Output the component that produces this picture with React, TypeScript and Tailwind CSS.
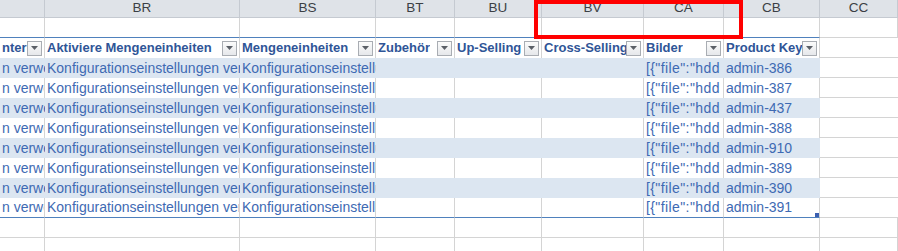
import React from "react";

const cols = ["", "BR", "BS", "BT", "BU", "BV", "CA", "CB", "CC"];

const headers = [
  "nter",
  "Aktiviere Mengeneinheiten",
  "Mengeneinheiten",
  "Zubehör",
  "Up-Selling",
  "Cross-Selling",
  "Bilder",
  "Product Key",
];

const keys = ["386", "387", "437", "388", "910", "389", "390", "391"];

const rowCells = (key: string) => [
  "n verwenden",
  "Konfigurationseinstellungen verwenden",
  "Konfigurationseinstellungen verwenden",
  "",
  "",
  "",
  '[{"file":"hdd',
  `admin-${key}`,
];

function FilterButton() {
  return (
    <span className="ml-auto mr-[2px] flex h-[15px] w-[15px] shrink-0 items-center justify-center border border-[#a9adb3] bg-gradient-to-b from-[#fbfbfb] to-[#e6e8eb]">
      <svg width="7" height="4" viewBox="0 0 7 4">
        <path d="M0 0h7L3.5 4z" fill="#5a5f66" />
      </svg>
    </span>
  );
}

export default function App() {
  return (
    <div className="relative h-[251px] w-[898px] overflow-hidden bg-white font-['Liberation_Sans',Arial,sans-serif]">
      <div className="grid grid-cols-[45px_195px_136px_79px_87px_102px_80px_96px_78px]">
        {/* Column letters */}
        {cols.map((c, i) => (
          <div
            key={"h" + i}
            className="flex h-[18px] items-center justify-center border-r border-b border-[#c5cad1] bg-[#dfe3e8] text-[13.5px] text-[#3b3f45]"
          >
            {c}
          </div>
        ))}

        {/* Empty row above the table */}
        {cols.map((_, i) => (
          <div
            key={"e" + i}
            className={`h-5 border-r border-[#d4d4d4] border-b ${i < 8 ? "border-b-[#4f81bd]" : ""}`}
          />
        ))}

        {/* Table headers */}
        {headers.map((h, i) => (
          <div
            key={"t" + i}
            className="flex h-5 items-center overflow-hidden whitespace-nowrap border-r border-[#d4d4d4] pl-[2px] text-[13px] font-bold text-[#2f5597]"
          >
            <span className="overflow-hidden">{h}</span>
            <FilterButton />
          </div>
        ))}
        <div className="h-5 border-b border-[#d4d4d4]" />

        {/* Data rows */}
        {keys.map((k, r) => {
          const band = r % 2 === 0;
          const last = r === keys.length - 1;
          return (
            <React.Fragment key={k}>
              {rowCells(k).map((t, i) => (
                <div
                  key={i}
                  className={`relative flex h-5 items-center overflow-hidden whitespace-nowrap pl-[2px] text-[14px] text-[#3e6ab3] ${
                    i === 6 ? "tracking-[0.4px]" : ""
                  } ${band ? "bg-[#dce6f1]" : "border-r border-[#d4d4d4]"} ${
                    last ? "border-b border-b-[#4f81bd]" : ""
                  }`}
                >
                  {t}
                  {last && i === 7 && (
                    <span className="absolute right-0 bottom-0 h-[4px] w-[4px] bg-[#3b5fb0]" />
                  )}
                </div>
              ))}
              <div className="h-5 border-b border-[#d4d4d4]" />
            </React.Fragment>
          );
        })}

        {/* Empty rows below */}
        {[0, 1].map((r) =>
          cols.map((_, i) => (
            <div key={`b${r}-${i}`} className="h-5 border-r border-b border-[#d4d4d4]" />
          ))
        )}
      </div>

      {/* Highlight box */}
      <div className="absolute left-[534px] top-0 h-[39px] w-[209px] border-4 border-[#ff0000]" />
    </div>
  );
}
